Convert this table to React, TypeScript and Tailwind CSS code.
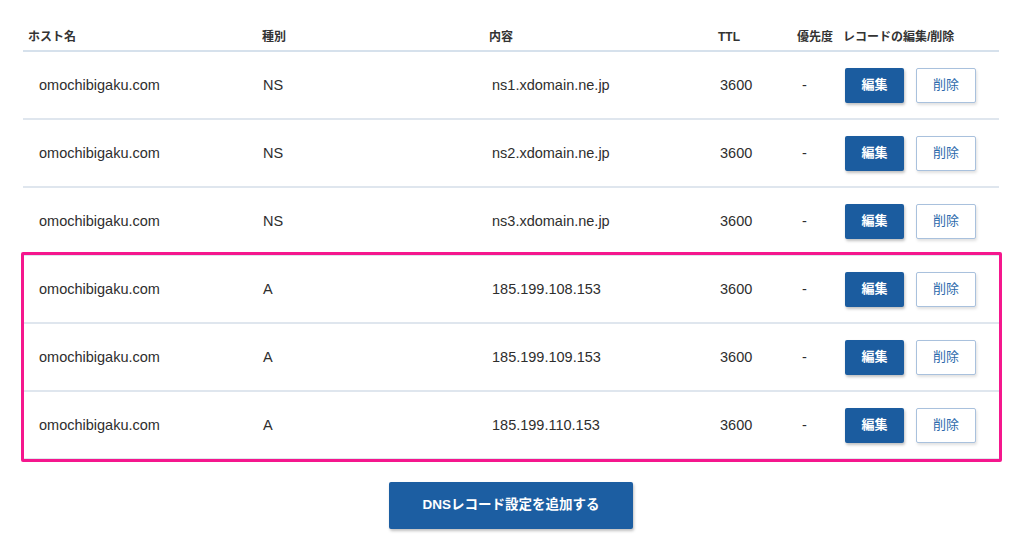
import React from "react";

const rows = [
  { host: "omochibigaku.com", type: "NS", content: "ns1.xdomain.ne.jp" },
  { host: "omochibigaku.com", type: "NS", content: "ns2.xdomain.ne.jp" },
  { host: "omochibigaku.com", type: "NS", content: "ns3.xdomain.ne.jp" },
  { host: "omochibigaku.com", type: "A", content: "185.199.108.153" },
  { host: "omochibigaku.com", type: "A", content: "185.199.109.153" },
  { host: "omochibigaku.com", type: "A", content: "185.199.110.153" },
];

const grid = "grid grid-cols-[239px_227px_229px_79px_46px_156px]";

function Row({ r }: { r: (typeof rows)[number] }) {
  return (
    <div className={`${grid} h-[68px] items-center border-b-2 border-[#dfe6ee] text-[14.5px] text-[#2e2e2e]`}>
      <div className="pl-4 pt-px">{r.host}</div>
      <div className="pl-px pt-px">{r.type}</div>
      <div className="pl-[3px] pt-px">{r.content}</div>
      <div className="pl-[2px] pt-px">3600</div>
      <div className="pl-[5px] pt-px">-</div>
      <div className="flex items-center gap-3 pl-[2px]">
        <button className="flex h-[35px] w-[59px] items-center justify-center rounded-[2px] bg-[#1b5c9f] text-[13px] font-bold text-white shadow-[1px_2px_3px_rgba(0,0,0,0.25)]">
          編集
        </button>
        <button className="flex h-[35px] w-[60px] items-center justify-center rounded-[2px] border border-[#a9c1dd] bg-white text-[13px] text-[#2c6aac] shadow-[1px_2px_3px_rgba(0,0,0,0.12)]">
          削除
        </button>
      </div>
    </div>
  );
}

export default function App() {
  return (
    <div
      className="h-[556px] w-[1024px] bg-white pt-[25px]"
      style={{ fontFamily: '"Liberation Sans", "Noto Sans CJK JP", sans-serif' }}
    >
      <div className="ml-[23px] w-[976px]">
        <div className={`${grid} h-[27px] items-start border-b-2 border-[#d6e1ec] pt-[3px] text-[12px] font-bold text-[#333]`}>
          <div className="pl-[5px]">ホスト名</div>
          <div>種別</div>
          <div>内容</div>
          <div>TTL</div>
          <div>優先度</div>
          <div>レコードの編集/削除</div>
        </div>
        {rows.slice(0, 3).map((r, i) => (
          <Row key={i} r={r} />
        ))}
        <div className="relative">
          {rows.slice(3).map((r, i) => (
            <Row key={i} r={r} />
          ))}
          <div className="pointer-events-none absolute -top-[4px] -bottom-[2px] -left-[2px] -right-[3px] rounded-[2px] border-[3px] border-[#f5178d]" />
        </div>
        <div className="flex justify-center pt-[22px]">
          <button className="flex h-[47px] w-[244px] items-center justify-center rounded-[2px] bg-[#1c5ea2] text-[13.5px] font-bold text-white shadow-[1px_2px_3px_rgba(0,0,0,0.25)]">
            DNSレコード設定を追加する
          </button>
        </div>
      </div>
    </div>
  );
}
